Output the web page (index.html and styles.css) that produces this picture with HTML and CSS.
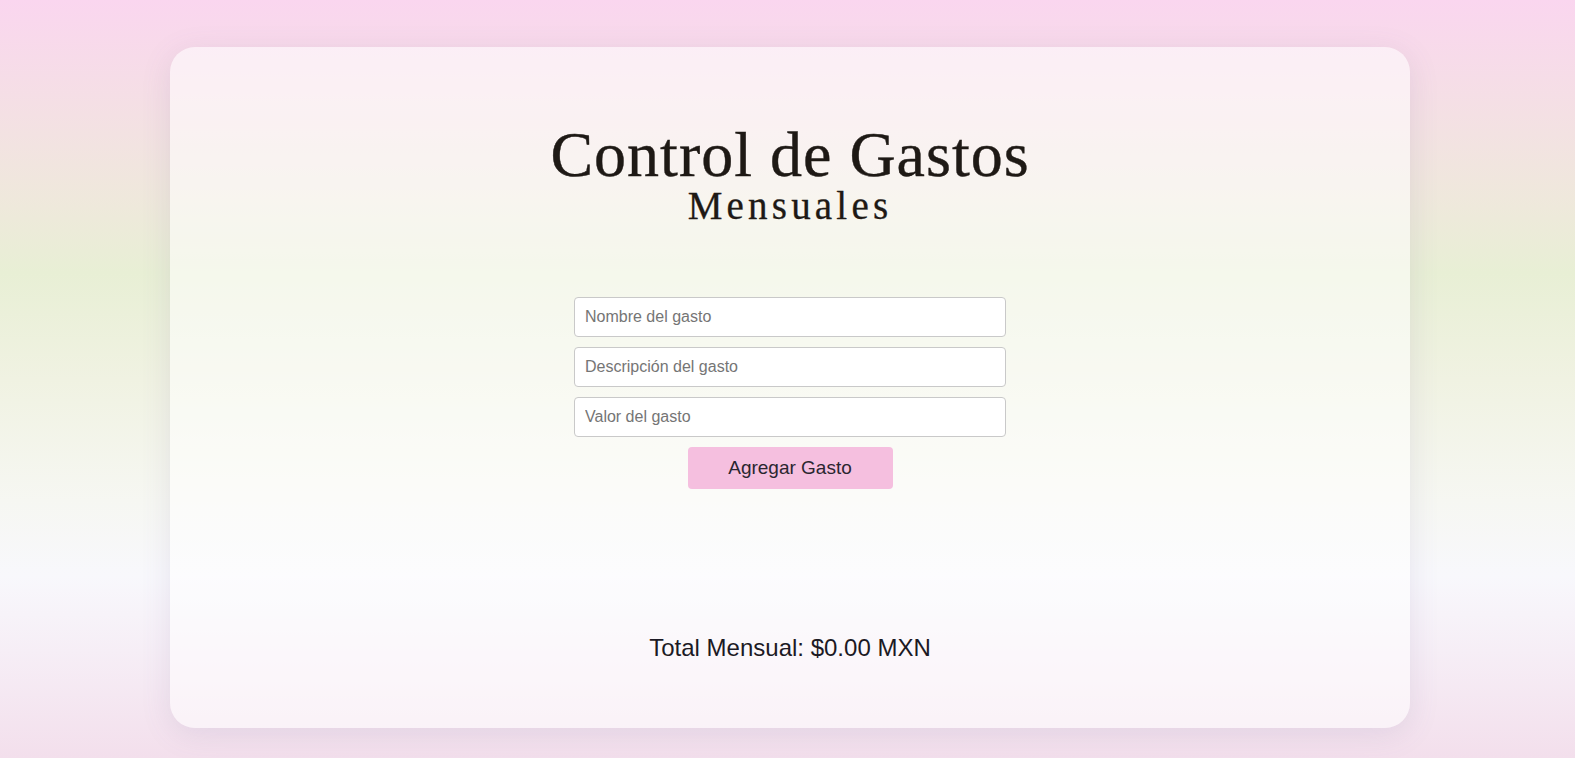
FILE: index.html
```html
<!DOCTYPE html>
<html lang="es">
<head>
<meta charset="utf-8">
<title>Control de Gastos Mensuales</title>
<link rel="stylesheet" href="styles.css">
</head>
<body>
<div class="page">
  <main class="card">
    <h1 class="title">
      <span class="title-main">Control de Gastos</span>
      <span class="title-sub">Mensuales</span>
    </h1>
    <form class="form">
      <input class="field" type="text" placeholder="Nombre del gasto">
      <input class="field" type="text" placeholder="Descripción del gasto">
      <input class="field" type="number" placeholder="Valor del gasto">
      <button class="btn" type="button">Agregar Gasto</button>
    </form>
    <p class="total">Total Mensual: $0.00 MXN</p>
  </main>
</div>
</body>
</html>
```

FILE: styles.css
```css
html, body {
  margin: 0;
  padding: 0;
  height: 100%;
}

body {
  background: linear-gradient(to bottom,
    #fad6ef 0%,
    #f4e0e4 15%,
    #efe8dc 26%,
    #e8efd5 36%,
    #f0f2e2 50%,
    #f6f7f2 66%,
    #f8f8fc 76%,
    #f6eef6 86%,
    #f3dfec 100%);
  font-family: "Liberation Sans", Arial, sans-serif;
  overflow: hidden;
}

.page {
  display: flex;
  padding: 47px 165px 0 170px;
}

.card {
  flex: 1;
  display: flex;
  flex-direction: column;
  align-items: center;
  background: rgba(255, 255, 255, 0.55);
  border-radius: 25px;
  box-shadow: 0 6px 30px rgba(110, 90, 150, 0.13);
  padding: 78px 0 66px;
}

.title {
  margin: 0;
  display: flex;
  flex-direction: column;
  align-items: center;
  font-family: "Liberation Serif", "Times New Roman", serif;
  font-weight: normal;
  color: #1e1915;
}

.title-main {
  font-size: 64px;
  line-height: 60px;
  letter-spacing: 1px;
  -webkit-text-stroke: 0.4px #1e1915;
}

.title-sub {
  font-size: 39px;
  line-height: 42px;
  letter-spacing: 4.2px;
  -webkit-text-stroke: 0.3px #1e1915;
}

.form {
  margin-top: 70px;
  display: flex;
  flex-direction: column;
  align-items: center;
  gap: 10px;
}

.field {
  box-sizing: border-box;
  width: 432px;
  height: 40px;
  padding: 0 10px;
  border: 1px solid #c9c9c9;
  border-radius: 4px;
  background: #fff;
  font-family: "Liberation Sans", Arial, sans-serif;
  font-size: 16px;
  color: #333;
  outline: none;
  -moz-appearance: textfield;
}

.field::-webkit-outer-spin-button,
.field::-webkit-inner-spin-button {
  -webkit-appearance: none;
  margin: 0;
}

.field::placeholder {
  color: #757575;
}

.btn {
  width: 205px;
  height: 42px;
  border: none;
  border-radius: 4px;
  background: #f5bfdf;
  color: #2a2630;
  font-family: "Liberation Sans", Arial, sans-serif;
  font-size: 19px;
  cursor: pointer;
}

.total {
  margin: 145px 0 0;
  font-size: 24px;
  line-height: 28px;
  color: #1c1a24;
}
```
